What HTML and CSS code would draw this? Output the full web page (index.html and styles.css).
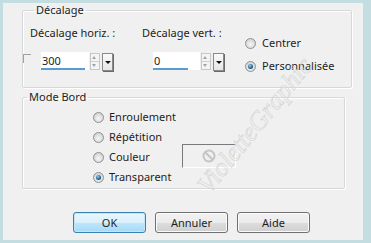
FILE: index.html
```html
<!DOCTYPE html>
<html lang="fr">
<head>
  <meta charset="UTF-8">
  <title>Décalage</title>
  <link rel="stylesheet" href="styles.css">
</head>
<body>
  <div class="dialog">
    <fieldset class="group offset">
      <legend>Décalage</legend>
      <div class="field field-h">
        <label>Décalage horiz. :</label>
        <div class="field-row">
          <span class="check"></span>
          <div class="num"><span class="val">300</span><span class="bar" style="width: 44px"></span></div>
          <span class="spin"><i class="up"></i><i class="down"></i></span>
          <span class="drop"></span>
        </div>
      </div>
      <div class="field field-v">
        <label>Décalage vert. :</label>
        <div class="field-row">
          <div class="num"><span class="val">0</span><span class="bar" style="width: 35px"></span></div>
          <span class="spin"><i class="up"></i><i class="down"></i></span>
          <span class="drop"></span>
        </div>
      </div>
      <div class="radios">
        <div class="radio"><span class="dot"></span>Centrer</div>
        <div class="radio"><span class="dot on"></span>Personnalisée</div>
      </div>
    </fieldset>

    <fieldset class="group mode">
      <legend>Mode Bord</legend>
      <div class="mode-grid">
        <div class="radio"><span class="dot"></span>Enroulement</div>
        <div class="radio"><span class="dot"></span>Répétition</div>
        <div class="radio"><span class="dot"></span>Couleur</div>
        <div class="radio"><span class="dot on"></span>Transparent</div>
        <div class="swatch">
          <svg width="14" height="14" viewBox="0 0 14 14">
            <circle cx="7" cy="7" r="5.5" fill="none" stroke="#c4c4c4" stroke-width="2"/>
            <line x1="3" y1="3" x2="11" y2="11" stroke="#c4c4c4" stroke-width="2"/>
          </svg>
        </div>
      </div>
    </fieldset>

    <div class="buttons">
      <button class="btn default">OK</button>
      <button class="btn">Annuler</button>
      <button class="btn">Aide</button>
    </div>

    <span class="watermark">VioletteGraphic</span>
  </div>
</body>
</html>
```

FILE: styles.css
```css
body { margin: 0; background: #c3dde0; font-family: "Noto Sans", "Open Sans", sans-serif; font-size: 11px; line-height: 14px; color: #1e1e1e; }
.dialog { position: relative; overflow: hidden; width: 360px; height: 237px; margin: 3px 8px 3px 3px; background: #f0f0f0; }

.group { margin: 0 0 0 19px; width: 321px; border: 1px solid #d5d9dc; border-radius: 2px; box-shadow: 1px 1px 0 #fff, inset 1px 1px 0 #fff; }
.group legend { padding: 0 2px; margin-left: 4px; line-height: 14px; }

.offset { display: flex; padding: 9px 0 14px 7px; }
.field-h { width: 112px; }
.field-v { width: 103px; }
.field-row { display: flex; align-items: flex-start; margin-top: 12px; }
.field-v .field-row { padding-left: 11px; }
.check { width: 7px; height: 8px; margin: 2px 10px 0 -7px; border-top: 1px solid #a0a0a0; border-left: 1px solid #a0a0a0; }
.num { position: relative; width: 48px; height: 18px; background: #fff; }
.field-v .num { width: 47px; }
.val { display: block; padding: 2px 0 0 1px; }
.bar { position: absolute; left: 0; bottom: 0; height: 2px; background: #5c9bd1; }
.spin { display: flex; flex-direction: column; width: 8px; height: 15px; margin: 1px 2px 0 1px; border: 1px solid #c8c8c8; background: #f4f4f4; }
.spin i { flex: 1; position: relative; }
.spin .up { border-bottom: 1px solid #d0d0d0; }
.spin .up::after, .spin .down::after { content: ""; position: absolute; left: 1px; border-left: 2px solid transparent; border-right: 2px solid transparent; }
.spin .up::after { top: 2px; border-bottom: 3px solid #9aa6b0; }
.spin .down::after { top: 2px; border-top: 3px solid #9aa6b0; }
.drop { position: relative; width: 9px; height: 16px; margin-top: 1px; border: 1px solid #8a8a8a; background: linear-gradient(#fafafa, #e6e6e6); box-shadow: 1px 1px 0 #6a6a6a; }
.drop::after { content: ""; position: absolute; left: 2px; top: 7px; border-left: 3px solid transparent; border-right: 3px solid transparent; border-top: 3px solid #111; }

.radios { display: flex; flex-direction: column; gap: 9px; margin-top: 10px; }
.radio { display: flex; align-items: center; height: 14px; white-space: nowrap; }
.dot { position: relative; box-sizing: border-box; width: 11px; height: 11px; margin-right: 5px; border: 1px solid #8f9091; border-radius: 50%; background: radial-gradient(circle at 50% 60%, #f6f6f6, #d6d6d6 70%, #c8c8c8); }
.dot.on::after { content: ""; position: absolute; left: 2px; top: 2px; width: 5px; height: 5px; border-radius: 50%; background: radial-gradient(circle at 40% 35%, #8fd0f2, #1b5f8f 60%, #0e3d5e); }
.offset .dot { margin-right: 6px; }

.mode { margin-top: 2px; padding: 6px 0 4px 0; }
.mode-grid { display: grid; grid-template-columns: 89px 54px; grid-auto-rows: 14px; row-gap: 6px; margin-left: 70px; }
.mode-grid .radio { grid-column: 1; }
.swatch { grid-column: 2; grid-row: 3; align-self: center; display: flex; align-items: center; justify-content: center; box-sizing: border-box; width: 54px; height: 24px; margin-top: -2px; border-top: 1px solid #7a7a7a; border-left: 1px solid #7a7a7a; border-right: 1px solid #fff; border-bottom: 1px solid #fff; }

.buttons { display: flex; gap: 9px; margin: 23px 0 0 70px; }
.btn { box-sizing: border-box; width: 73px; height: 21px; padding: 0; border: 1px solid #707070; border-radius: 3px; font: inherit; color: #1e1e1e; background: linear-gradient(#f2f2f2, #ebebeb 50%, #dddddd 51%, #cfcfcf); box-shadow: inset 0 0 0 1px #fbfbfb; }
.btn.default { border-color: #3c7fb1; background: linear-gradient(#eaf6fd, #d9f0fc 50%, #bee6fd 51%, #a7d9f5); box-shadow: inset 0 0 0 1px #c4e5f6; }

.watermark { position: absolute; left: 200px; top: 172px; font-family: "Liberation Serif", serif; font-style: italic; font-size: 26px; line-height: 30px; color: transparent; -webkit-text-stroke: 0.6px #d4d4d4; transform: rotate(-51deg); transform-origin: left center; pointer-events: none; }
```
